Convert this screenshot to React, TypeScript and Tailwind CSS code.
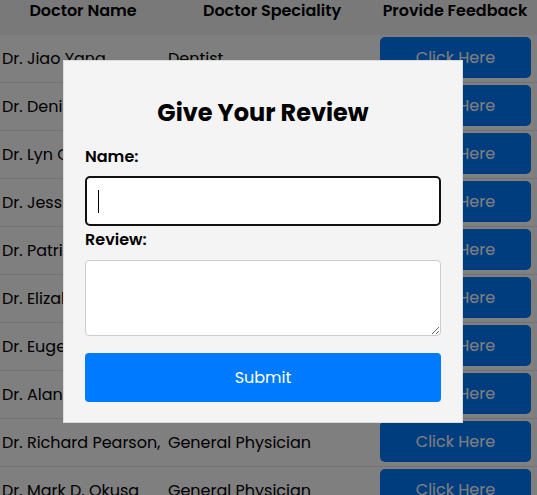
const doctors = [
  { name: "Dr. Jiao Yang", spec: "Dentist" },
  { name: "Dr. Denis Raymond", spec: "Dentist" },
  { name: "Dr. Lyn Christie", spec: "Gynecologist" },
  { name: "Dr. Jessica White", spec: "Gynecologist" },
  { name: "Dr. Patricia Meyer", spec: "Orthopaedic" },
  { name: "Dr. Elizabeth Hart", spec: "Orthopaedic" },
  { name: "Dr. Eugene Wong", spec: "Dermatologist" },
  { name: "Dr. Alan Cutler", spec: "Dermatologist" },
  { name: "Dr. Richard Pearson,", spec: "General Physician" },
  { name: "Dr. Mark D. Okusa", spec: "General Physician" },
];

export default function App() {
  return (
    <div className="relative h-[495px] w-[537px] overflow-hidden bg-white font-['Poppins','Inter',sans-serif] text-black">
      {/* table underneath */}
      <div className="flex flex-col">
        <div className="flex h-[35px] bg-[#f2f2f2] text-[16px] font-semibold leading-[22px]">
          <div className="w-[166px] text-center">Doctor Name</div>
          <div className="w-[212px] text-center">Doctor Speciality</div>
          <div className="w-[154px] text-center">Provide Feedback</div>
        </div>
        {doctors.map((d) => (
          <div key={d.name} className="flex h-[48px] shrink-0 items-center border-b border-[#e6e6e6] text-[16px] whitespace-nowrap">
            <div className="w-[166px] overflow-hidden pl-[2px]">{d.name}</div>
            <div className="w-[214px] overflow-hidden pl-[2px]">{d.spec}</div>
            <button className="mb-[2px] h-[41px] w-[151px] rounded-[5px] bg-[#007bff] text-[16px] text-white">Click Here</button>
          </div>
        ))}
      </div>

      {/* modal overlay */}
      <div className="absolute inset-0 bg-black/50" />
      <div className="absolute left-[63px] top-[60px] flex w-[400px] flex-col border border-[#dcdcdc] bg-[#f4f4f4] px-[21px] pb-[20px] pt-[36px]">
        <h2 className="text-center text-[24px] font-bold leading-[32px]">Give Your Review</h2>
        <label className="mt-[16px] text-[16px] font-semibold leading-[24px]">Name:</label>
        <div className="mt-[7px] flex h-[50px] items-center rounded-[5px] border-2 border-[#111] bg-white pl-[11px]">
          <div className="h-[23px] w-[1px] bg-black" />
        </div>
        <label className="mt-[2px] text-[16px] font-semibold leading-[24px]">Review:</label>
        <textarea className="mt-[8px] h-[76px] rounded-[4px] border border-[#cccccc] bg-white outline-none" />
        <button className="mt-[17px] h-[49px] rounded-[4px] bg-[#007bff] text-[16px] text-white">Submit</button>
      </div>
    </div>
  );
}
